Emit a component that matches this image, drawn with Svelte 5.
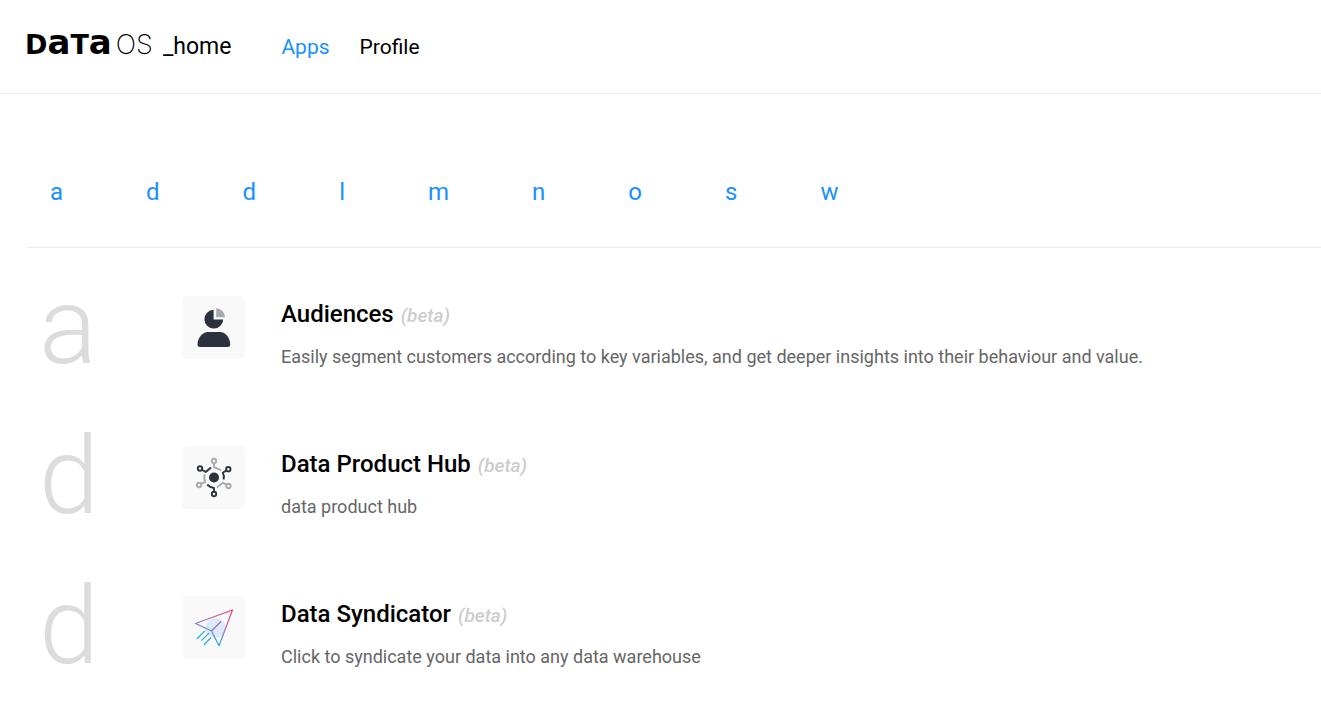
<script>
  const letters = ['a', 'd', 'd', 'l', 'm', 'n', 'o', 's', 'w'];
  const apps = [
    {
      letter: 'a',
      icon: 'audiences',
      name: 'Audiences',
      text: 'Easily segment customers according to key variables, and get deeper insights into their behaviour and value.'
    },
    { letter: 'd', icon: 'hub', name: 'Data Product Hub', text: 'data product hub' },
    {
      letter: 'd',
      icon: 'plane',
      name: 'Data Syndicator',
      text: 'Click to syndicate your data into any data warehouse'
    }
  ];
</script>

<header>
  <a class="brand" href="#home">
    <span class="wordmark">
      <span class="heavy">D<span class="tall">a</span>T<span class="tall">a</span></span>
      <span class="thin">OS</span>
    </span>
    <span class="suffix">_home</span>
  </a>
  <nav class="main-nav">
    <a class="active" href="#apps">Apps</a>
    <a href="#profile">Profile</a>
  </nav>
</header>

<main>
  <nav class="letters">
    {#each letters as letter}
      <a href="#{letter}">{letter}</a>
    {/each}
  </nav>

  <div class="list">
    {#each apps as app}
      <section>
        <div class="initial">{app.letter}</div>
        <div class="tile">
          {#if app.icon === 'audiences'}
            <svg viewBox="0 0 63 63" aria-hidden="true">
              <path fill="#2b323e" d="M31.6 13.8V23.6H41.2A9.4 9.4 0 1 1 31.6 13.8Z" />
              <path fill="#a7abb0" d="M34.2 12.2A9.2 9.2 0 0 1 43 21.3H34.2Z" />
              <path fill="#2b323e" d="M26 36H38C43.500 36 48.200 42 48.200 48.500C48.200 50.200 47.200 51 45.500 51H18.200C16.500 51 15.500 50.200 15.500 48.500C15.500 42 20.500 36 26 36Z" />
            </svg>
          {:else if app.icon === 'hub'}
            <svg viewBox="0 0 63 63" fill="none" stroke-width="1.900" stroke-linejoin="round" aria-hidden="true">
              <circle cx="32" cy="31.500" r="5" fill="#2b323e" />
              <g stroke="#a7a9ac">
                <circle cx="32" cy="15" r="2.200" />
                <path d="M32 17.500V21.200L38.800 24.200" />
                <circle cx="17" cy="39" r="2.200" />
                <path d="M19.200 37.800L23.200 35.800Q21.400 31.500 23 28.300" />
                <circle cx="46.400" cy="40" r="2.200" />
                <path d="M44.300 38.800L41 36.800L35 41.200" />
              </g>
              <g stroke="#2b323e">
                <circle cx="18" cy="22.500" r="2.200" />
                <path d="M20 23.800L23.700 26L29 21.600" />
                <circle cx="46.300" cy="23.200" r="2.200" />
                <path d="M44.200 24.500L40.800 26.800Q42.600 30 41.600 33.500" />
                <circle cx="32" cy="48" r="2.200" />
                <path d="M32 45.700V42Q28 41.600 25.200 38.600" />
              </g>
            </svg>
          {:else}
            <svg viewBox="0 0 63 63" fill="none" stroke-width="1.200" stroke-linejoin="round" aria-hidden="true">
              <defs>
                <linearGradient id="plane-stroke" gradientUnits="userSpaceOnUse" x1="47" y1="14" x2="31" y2="50">
                  <stop offset="0" stop-color="#ee4065" />
                  <stop offset="0.450" stop-color="#b565b5" />
                  <stop offset="1" stop-color="#12b3e8" />
                </linearGradient>
              </defs>
              <circle cx="33.500" cy="32" r="10" fill="#dce9f9" />
              <path stroke="url(#plane-stroke)" d="M50.500 14L13.500 27.500L29.500 35L37 49.700ZM29.500 35L39 25.500" />
              <path stroke="#2aaee0" d="M22.800 35L14.800 43M27 37L19.300 44.600M29 41.500L21.800 49" />
            </svg>
          {/if}
        </div>
        <div class="info">
          <h2>{app.name} <em>(beta)</em></h2>
          <p>{app.text}</p>
        </div>
      </section>
    {/each}
  </div>
</main>

<style>
  :global(body) {
    margin: 0;
    background: #fff;
    color: #000;
    font-family: Roboto, sans-serif;
  }

  a {
    color: inherit;
    text-decoration: none;
  }

  header {
    display: flex;
    align-items: center;
    gap: 50px;
    height: 93px;
    padding-left: 25px;
    border-bottom: 1px solid #ebebeb;
  }

  .brand,
  .wordmark {
    display: flex;
    align-items: baseline;
  }

  .brand {
    gap: 10px;
    padding-bottom: 4px;
    line-height: 32px;
  }

  .wordmark {
    gap: 4px;
  }

  .heavy {
    font: 700 27px/32px 'DejaVu Sans', sans-serif;
  }

  .tall {
    font-size: 34px;
  }

  .thin {
    font: 200 27px/32px Inter, sans-serif;
  }

  .suffix {
    font-size: 23px;
  }

  .main-nav {
    display: flex;
    gap: 30px;
    font-size: 21px;
    line-height: 32px;
  }

  .main-nav .active,
  .letters {
    color: #1890ff;
  }

  main {
    padding-left: 27px;
  }

  .letters {
    display: flex;
    gap: 83px;
    padding: 82px 23px 39px;
    border-bottom: 1px solid #ebebeb;
    font-size: 24px;
    line-height: 32px;
  }

  .list {
    padding-top: 48px;
  }

  section {
    display: grid;
    grid-template-columns: 143px 63px 1fr;
    min-height: 150px;
    padding-left: 12px;
  }

  .initial {
    color: #dcdcdc;
    font-size: 108px;
    font-weight: 300;
    line-height: 61px;
  }

  .tile {
    height: 63px;
    border-radius: 5px;
    background: #f9f9f9;
  }

  svg {
    display: block;
    width: 100%;
  }

  .info {
    padding-left: 36px;
  }

  h2 {
    margin: 0;
    font-size: 24px;
    font-weight: 500;
    line-height: 36px;
  }

  em {
    margin-left: 1px;
    color: #ccc;
    font-size: 19px;
    font-weight: 500;
  }

  p {
    margin: 10px 0 0;
    color: #666;
    font-size: 18px;
    line-height: 26px;
  }
</style>
